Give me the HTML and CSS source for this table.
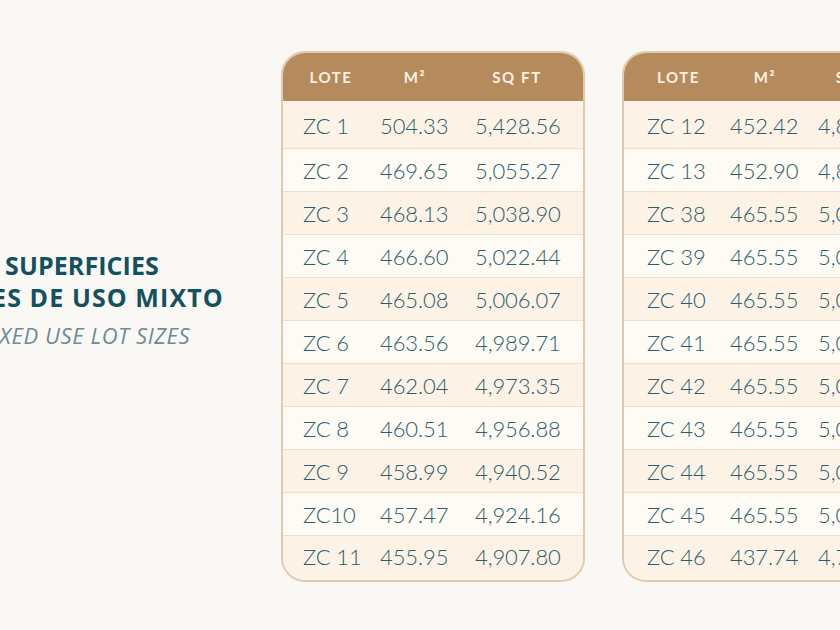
FILE: index.html
```html
<!DOCTYPE html>
<html lang="es">
<head>
<meta charset="utf-8">
<title>Superficies lotes de uso mixto</title>
<link rel="stylesheet" href="styles.css">
</head>
<body>
<main class="page">
  <header class="intro">
    <h1 class="title"><span class="title-line">SUPERFICIES</span><span class="title-line title-line--wide">LOTES DE USO MIXTO</span></h1>
    <p class="subtitle">MIXED USE LOT SIZES</p>
  </header>
  <section class="tables">
    <div class="lot-table lot-table--a">
      <div class="thead"><span>LOTE</span><span>M²</span><span>SQ FT</span></div>
      <div class="row"><span>ZC 1</span><span>504.33</span><span>5,428.56</span></div>
      <div class="row"><span>ZC 2</span><span>469.65</span><span>5,055.27</span></div>
      <div class="row"><span>ZC 3</span><span>468.13</span><span>5,038.90</span></div>
      <div class="row"><span>ZC 4</span><span>466.60</span><span>5,022.44</span></div>
      <div class="row"><span>ZC 5</span><span>465.08</span><span>5,006.07</span></div>
      <div class="row"><span>ZC 6</span><span>463.56</span><span>4,989.71</span></div>
      <div class="row"><span>ZC 7</span><span>462.04</span><span>4,973.35</span></div>
      <div class="row"><span>ZC 8</span><span>460.51</span><span>4,956.88</span></div>
      <div class="row"><span>ZC 9</span><span>458.99</span><span>4,940.52</span></div>
      <div class="row"><span>ZC10</span><span>457.47</span><span>4,924.16</span></div>
      <div class="row"><span>ZC 11</span><span>455.95</span><span>4,907.80</span></div>
    </div>
    <div class="lot-table lot-table--b">
      <div class="thead"><span>LOTE</span><span>M²</span><span>SQ FT</span></div>
      <div class="row"><span>ZC 12</span><span>452.42</span><span>4,869.88</span></div>
      <div class="row"><span>ZC 13</span><span>452.90</span><span>4,875.05</span></div>
      <div class="row"><span>ZC 38</span><span>465.55</span><span>5,011.21</span></div>
      <div class="row"><span>ZC 39</span><span>465.55</span><span>5,011.21</span></div>
      <div class="row"><span>ZC 40</span><span>465.55</span><span>5,011.21</span></div>
      <div class="row"><span>ZC 41</span><span>465.55</span><span>5,011.21</span></div>
      <div class="row"><span>ZC 42</span><span>465.55</span><span>5,011.21</span></div>
      <div class="row"><span>ZC 43</span><span>465.55</span><span>5,011.21</span></div>
      <div class="row"><span>ZC 44</span><span>465.55</span><span>5,011.21</span></div>
      <div class="row"><span>ZC 45</span><span>465.55</span><span>5,011.21</span></div>
      <div class="row"><span>ZC 46</span><span>437.74</span><span>4,711.77</span></div>
    </div>
  </section>
</main>
</body>
</html>
```
FILE: styles.css
```css
html, body {
  margin: 0;
  padding: 0;
}
body {
  background: #f9f8f5;
  width: 840px;
  height: 630px;
  overflow: hidden;
  font-family: "Lato", "Open Sans", sans-serif;
}
.page {
  display: flex;
  align-items: flex-start;
  padding-top: 51px;
}
.intro {
  flex: 0 0 300px;
  margin-left: -68px;
  margin-top: 198px;
  text-align: center;
}
.title {
  margin: 0;
  font-family: "Open Sans", sans-serif;
  font-weight: 700;
  font-size: 25px;
  line-height: 32px;
  color: #15505f;
  letter-spacing: 0.1px;
}
.title-line {
  display: block;
}
.title-line--wide {
  letter-spacing: 1.1px;
}
.subtitle {
  margin: 6px 0 0;
  font-family: "Open Sans", sans-serif;
  font-style: italic;
  font-weight: 500;
  font-size: 22px;
  line-height: 32px;
  color: #6d8a95;
  letter-spacing: 0.6px;
}
.tables {
  display: flex;
  gap: 37px;
  margin-left: 49px;
  flex-shrink: 0;
}
.lot-table {
  flex-shrink: 0;
  border: 2px solid #e2cbad;
  border-radius: 24px;
  overflow: hidden;
  background: #fdf5e9;
}
.lot-table--a { width: 300px; }
.lot-table--b { width: 300px; }
.thead {
  display: grid;
  align-items: center;
  height: 48px;
  background: #b58b5e;
  color: #fcf0e2;
  font-family: "Lato", sans-serif;
  font-weight: 700;
  font-size: 15px;
  letter-spacing: 1.6px;
  text-align: center;
}
.row {
  display: grid;
  align-items: center;
  height: 43px;
  box-sizing: border-box;
  border-top: 1.5px solid #efdfca;
  color: #2a5d6e;
  font-weight: 300;
  font-size: 22px;
  letter-spacing: -0.1px;
}
.row:nth-child(2) {
  height: 47px;
  border-top: 0;
  padding-top: 2px;
}
.row:last-child {
  height: 45px;
  padding-bottom: 3px;
}
.row:nth-child(odd) { background: #fefaf4; }
.row:nth-child(even) { background: #fcf3e6; }

.lot-table--a .thead { grid-template-columns: 96px 72px 1fr; }
.lot-table--a .row { grid-template-columns: 77px 95px 1fr; padding-left: 20px; }
.lot-table--b .thead { grid-template-columns: 109px 64px 1fr; }
.lot-table--b .row { grid-template-columns: 83px 88px 1fr; padding-left: 23px; }
```
